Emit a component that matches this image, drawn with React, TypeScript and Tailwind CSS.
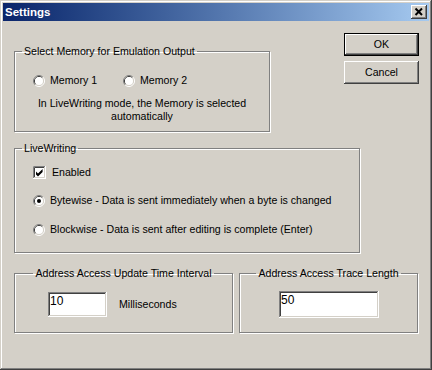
import React from 'react'

function Radio({ checked }: { checked?: boolean }) {
  return (
    <svg width="12" height="12" viewBox="0 0 12 12" className="shrink-0">
      <path d="M2.11 9.89A5.5 5.5 0 0 1 9.89 2.11" fill="none" stroke="#808080" />
      <path d="M9.89 2.11A5.5 5.5 0 0 1 2.11 9.89" fill="none" stroke="#ffffff" />
      <path d="M2.82 9.18A4.5 4.5 0 0 1 9.18 2.82" fill="none" stroke="#404040" />
      <path d="M9.18 2.82A4.5 4.5 0 0 1 2.82 9.18" fill="none" stroke="#d4d0c8" />
      <circle cx="6" cy="6" r="4" fill="#ffffff" />
      {checked && <circle cx="6" cy="6" r="2" fill="#000000" />}
    </svg>
  )
}

function Checkbox({ checked }: { checked?: boolean }) {
  return (
    <svg width="13" height="13" viewBox="0 0 13 13" className="shrink-0">
      <rect x="0" y="0" width="13" height="13" fill="#ffffff" />
      <path d="M0.5 12V0.5H12" fill="none" stroke="#808080" />
      <path d="M1.5 11V1.5H11" fill="none" stroke="#404040" />
      <path d="M0 12.5H12.5V0" fill="none" stroke="#ffffff" />
      <path d="M1 11.5H11.5V1" fill="none" stroke="#d4d0c8" />
      {checked && <polygon points="3,5.5 5,7.5 9.6,3 9.6,6 5,10.5 3,8.5" fill="#000000" />}
    </svg>
  )
}

const raised =
  'shadow-[inset_-1px_-1px_#404040,inset_1px_1px_#ffffff,inset_-2px_-2px_#808080,inset_2px_2px_#d4d0c8]'
const sunken =
  'shadow-[inset_-1px_-1px_#ffffff,inset_1px_1px_#808080,inset_-2px_-2px_#d4d0c8,inset_2px_2px_#404040]'
const groupBox = 'border border-[#808080] shadow-[inset_1px_1px_#ffffff,1px_1px_#ffffff]'

export default function App() {
  return (
    <div
      className="w-[432px] h-[370px] bg-[#d4d0c8] p-[3px] flex flex-col text-black text-[10.6px] leading-[13px] font-['Liberation_Sans',Arial,sans-serif] shadow-[inset_-1px_-1px_#404040,inset_1px_1px_#d4d0c8,inset_-2px_-2px_#808080,inset_2px_2px_#ffffff]"
    >
      {/* Title bar */}
      <div className="h-[18px] flex items-center bg-linear-to-r from-[#0a246a] to-[#a6caf0] pl-[2px] pr-[2px]">
        <span className="font-bold text-white text-[11.5px] leading-[14px]">Settings</span>
        <button className={`ml-auto w-[16px] h-[14px] bg-[#d4d0c8] flex items-center justify-center ${raised}`}>
          <svg width="16" height="14" viewBox="0 0 16 14">
            <path d="M4.5 3.5L11 10M11 3.5L4.5 10" stroke="#000000" strokeWidth="2" />
          </svg>
        </button>
      </div>

      <div className="flex flex-col pl-[11px] pr-[10px] pt-[12px]">
        {/* Memory selection + buttons */}
        <div className="flex items-start justify-between">
          <fieldset className={`mt-[12px] w-[256px] h-[87px] ${groupBox}`}>
            <legend className="ml-[7px] px-[2px] leading-[13px]">Select Memory for Emulation Output</legend>
            <div className="flex items-center h-[13px] mt-[16px] pl-[18px]">
              <label className="flex items-center gap-[5px] w-[90px]">
                <Radio />
                <span>Memory 1</span>
              </label>
              <label className="flex items-center gap-[5px]">
                <Radio />
                <span>Memory 2</span>
              </label>
            </div>
            <p className="mt-[10px] text-center leading-[13px]">
              In LiveWriting mode, the Memory is selected
              <br />
              automatically
            </p>
          </fieldset>

          <div className="flex flex-col gap-[5px]">
            <button className={`w-[75px] h-[23px] bg-[#d4d0c8] border border-black ${raised}`}>OK</button>
            <button className={`w-[75px] h-[23px] bg-[#d4d0c8] ${raised}`}>Cancel</button>
          </div>
        </div>

        {/* LiveWriting */}
        <fieldset className={`mt-[10px] w-[346px] h-[111px] ${groupBox}`}>
          <legend className="ml-[7px] px-[2px] leading-[13px]">LiveWriting</legend>
          <div className="flex flex-col pl-[18px]">
            <label className="mt-[11px] h-[13px] flex items-center gap-[6px]">
              <Checkbox checked />
              <span>Enabled</span>
            </label>
            <label className="mt-[15px] h-[13px] flex items-center gap-[5px]">
              <Radio checked />
              <span>Bytewise - Data is sent immediately when a byte is changed</span>
            </label>
            <label className="mt-[16px] h-[13px] flex items-center gap-[5px]">
              <Radio />
              <span>Blockwise - Data is sent after editing is complete (Enter)</span>
            </label>
          </div>
        </fieldset>

        {/* Address access */}
        <div className="mt-[14px] flex gap-[6px]">
          <fieldset className={`w-[219px] h-[66px] ${groupBox}`}>
            <legend className="mx-auto px-[2px] leading-[13px]">Address Access Update Time Interval</legend>
            <div className="mt-[12px] pl-[33px] flex items-center gap-[12px]">
              <div className={`w-[59px] h-[25px] bg-white pl-[2px] pt-[2px] text-[12px] leading-[14px] ${sunken}`}>10</div>
              <span>Milliseconds</span>
            </div>
          </fieldset>
          <fieldset className={`w-[179px] h-[66px] ${groupBox}`}>
            <legend className="mx-auto px-[2px] leading-[13px]">Address Access Trace Length</legend>
            <div className="mt-[11px] pl-[39px]">
              <div className={`w-[100px] h-[27px] bg-white pl-[2px] pt-[2px] text-[12px] leading-[14px] ${sunken}`}>50</div>
            </div>
          </fieldset>
        </div>
      </div>
    </div>
  )
}
